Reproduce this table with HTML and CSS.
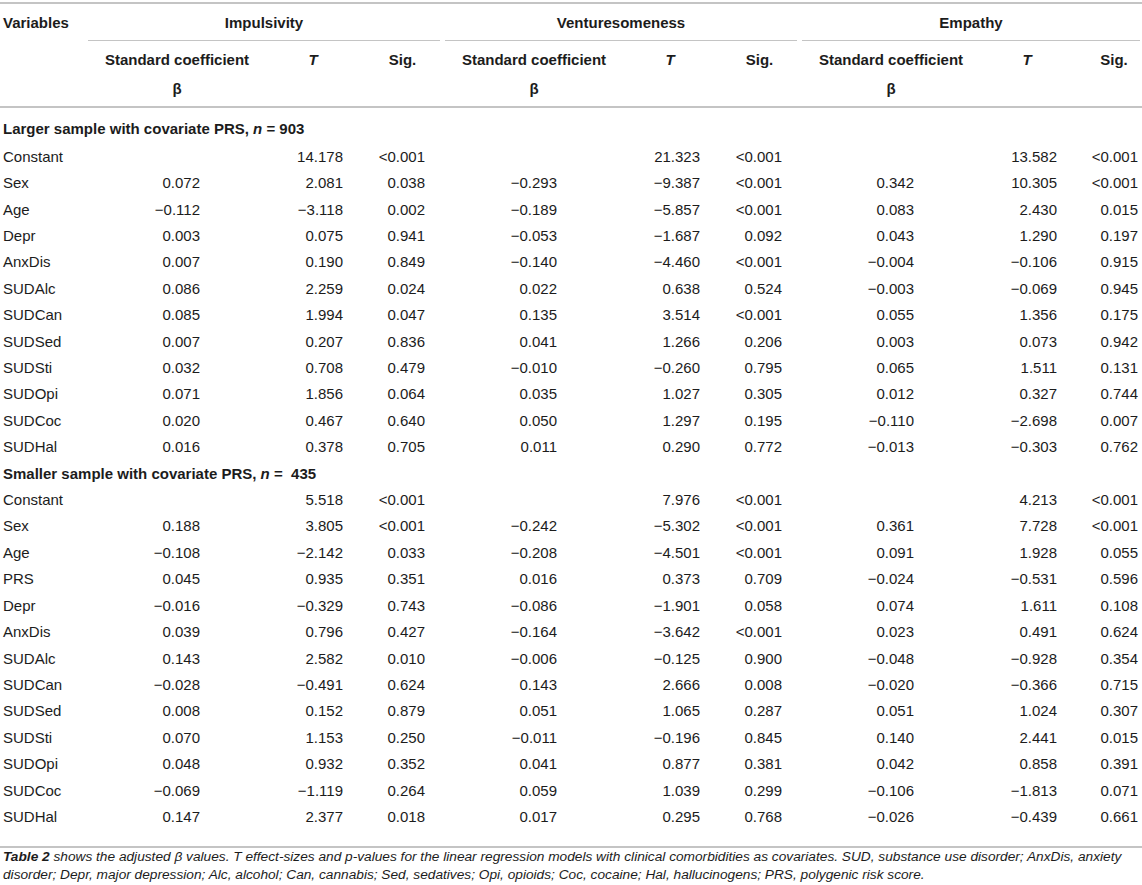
FILE: index.html
```html
<!DOCTYPE html>
<html lang="en">

<head>
  <meta charset="UTF-8">
  <meta name="viewport" content="width=device-width, initial-scale=1.0">
  <title>Table 2</title>
  <link rel="stylesheet" href="styles.css">
</head>

<body>
  <table class="stats">
    <colgroup>
      <col class="c-var">
      <col class="c-b"><col class="c-t"><col class="c-p">
      <col class="c-b"><col class="c-t"><col class="c-p">
      <col class="c-b"><col class="c-t"><col class="c-p-last">
    </colgroup>
    <thead>
      <tr>
        <th class="var" rowspan="2">Variables</th>
        <th class="group" colspan="3"><div class="group-title">Impulsivity</div></th>
        <th class="group" colspan="3"><div class="group-title">Venturesomeness</div></th>
        <th class="group last" colspan="3"><div class="group-title">Empathy</div></th>
      </tr>
      <tr class="sub">
        <th>Standard coefficient<br>β</th>
        <th><i>T</i></th>
        <th>Sig.</th>
        <th>Standard coefficient<br>β</th>
        <th><i>T</i></th>
        <th>Sig.</th>
        <th>Standard coefficient<br>β</th>
        <th><i>T</i></th>
        <th class="sig-last">Sig.</th>
      </tr>
    </thead>
    <tbody>
      <tr class="section first">
        <td colspan="10">Larger sample with covariate PRS, <i>n</i> = 903</td>
      </tr>
      <tr><td>Constant</td><td></td><td>14.178</td><td>&lt;0.001</td><td></td><td>21.323</td><td>&lt;0.001</td><td></td><td>13.582</td><td>&lt;0.001</td></tr>
      <tr><td>Sex</td><td>0.072</td><td>2.081</td><td>0.038</td><td>−0.293</td><td>−9.387</td><td>&lt;0.001</td><td>0.342</td><td>10.305</td><td>&lt;0.001</td></tr>
      <tr><td>Age</td><td>−0.112</td><td>−3.118</td><td>0.002</td><td>−0.189</td><td>−5.857</td><td>&lt;0.001</td><td>0.083</td><td>2.430</td><td>0.015</td></tr>
      <tr><td>Depr</td><td>0.003</td><td>0.075</td><td>0.941</td><td>−0.053</td><td>−1.687</td><td>0.092</td><td>0.043</td><td>1.290</td><td>0.197</td></tr>
      <tr><td>AnxDis</td><td>0.007</td><td>0.190</td><td>0.849</td><td>−0.140</td><td>−4.460</td><td>&lt;0.001</td><td>−0.004</td><td>−0.106</td><td>0.915</td></tr>
      <tr><td>SUDAlc</td><td>0.086</td><td>2.259</td><td>0.024</td><td>0.022</td><td>0.638</td><td>0.524</td><td>−0.003</td><td>−0.069</td><td>0.945</td></tr>
      <tr><td>SUDCan</td><td>0.085</td><td>1.994</td><td>0.047</td><td>0.135</td><td>3.514</td><td>&lt;0.001</td><td>0.055</td><td>1.356</td><td>0.175</td></tr>
      <tr><td>SUDSed</td><td>0.007</td><td>0.207</td><td>0.836</td><td>0.041</td><td>1.266</td><td>0.206</td><td>0.003</td><td>0.073</td><td>0.942</td></tr>
      <tr><td>SUDSti</td><td>0.032</td><td>0.708</td><td>0.479</td><td>−0.010</td><td>−0.260</td><td>0.795</td><td>0.065</td><td>1.511</td><td>0.131</td></tr>
      <tr><td>SUDOpi</td><td>0.071</td><td>1.856</td><td>0.064</td><td>0.035</td><td>1.027</td><td>0.305</td><td>0.012</td><td>0.327</td><td>0.744</td></tr>
      <tr><td>SUDCoc</td><td>0.020</td><td>0.467</td><td>0.640</td><td>0.050</td><td>1.297</td><td>0.195</td><td>−0.110</td><td>−2.698</td><td>0.007</td></tr>
      <tr><td>SUDHal</td><td>0.016</td><td>0.378</td><td>0.705</td><td>0.011</td><td>0.290</td><td>0.772</td><td>−0.013</td><td>−0.303</td><td>0.762</td></tr>
      <tr class="section">
        <td colspan="10">Smaller sample with covariate PRS, <i>n</i> =&nbsp; 435</td>
      </tr>
      <tr><td>Constant</td><td></td><td>5.518</td><td>&lt;0.001</td><td></td><td>7.976</td><td>&lt;0.001</td><td></td><td>4.213</td><td>&lt;0.001</td></tr>
      <tr><td>Sex</td><td>0.188</td><td>3.805</td><td>&lt;0.001</td><td>−0.242</td><td>−5.302</td><td>&lt;0.001</td><td>0.361</td><td>7.728</td><td>&lt;0.001</td></tr>
      <tr><td>Age</td><td>−0.108</td><td>−2.142</td><td>0.033</td><td>−0.208</td><td>−4.501</td><td>&lt;0.001</td><td>0.091</td><td>1.928</td><td>0.055</td></tr>
      <tr><td>PRS</td><td>0.045</td><td>0.935</td><td>0.351</td><td>0.016</td><td>0.373</td><td>0.709</td><td>−0.024</td><td>−0.531</td><td>0.596</td></tr>
      <tr><td>Depr</td><td>−0.016</td><td>−0.329</td><td>0.743</td><td>−0.086</td><td>−1.901</td><td>0.058</td><td>0.074</td><td>1.611</td><td>0.108</td></tr>
      <tr><td>AnxDis</td><td>0.039</td><td>0.796</td><td>0.427</td><td>−0.164</td><td>−3.642</td><td>&lt;0.001</td><td>0.023</td><td>0.491</td><td>0.624</td></tr>
      <tr><td>SUDAlc</td><td>0.143</td><td>2.582</td><td>0.010</td><td>−0.006</td><td>−0.125</td><td>0.900</td><td>−0.048</td><td>−0.928</td><td>0.354</td></tr>
      <tr><td>SUDCan</td><td>−0.028</td><td>−0.491</td><td>0.624</td><td>0.143</td><td>2.666</td><td>0.008</td><td>−0.020</td><td>−0.366</td><td>0.715</td></tr>
      <tr><td>SUDSed</td><td>0.008</td><td>0.152</td><td>0.879</td><td>0.051</td><td>1.065</td><td>0.287</td><td>0.051</td><td>1.024</td><td>0.307</td></tr>
      <tr><td>SUDSti</td><td>0.070</td><td>1.153</td><td>0.250</td><td>−0.011</td><td>−0.196</td><td>0.845</td><td>0.140</td><td>2.441</td><td>0.015</td></tr>
      <tr><td>SUDOpi</td><td>0.048</td><td>0.932</td><td>0.352</td><td>0.041</td><td>0.877</td><td>0.381</td><td>0.042</td><td>0.858</td><td>0.391</td></tr>
      <tr><td>SUDCoc</td><td>−0.069</td><td>−1.119</td><td>0.264</td><td>0.059</td><td>1.039</td><td>0.299</td><td>−0.106</td><td>−1.813</td><td>0.071</td></tr>
      <tr class="last"><td>SUDHal</td><td>0.147</td><td>2.377</td><td>0.018</td><td>0.017</td><td>0.295</td><td>0.768</td><td>−0.026</td><td>−0.439</td><td>0.661</td></tr>
    </tbody>
  </table>
  <p class="note"><b>Table 2</b> shows the adjusted β values. T effect-sizes and p-values for the linear regression models with clinical comorbidities as covariates. SUD, substance use disorder; AnxDis, anxiety disorder; Depr, major depression; Alc, alcohol; Can, cannabis; Sed, sedatives; Opi, opioids; Coc, cocaine; Hal, hallucinogens; PRS, polygenic risk score.</p>
</body>

</html>
```

FILE: styles.css
```css
body {
  margin: 0;
  font-family: "Liberation Sans", Arial, sans-serif;
  color: #1c1c1c;
  background: #fff;
}

/* table */
.stats {
  width: 1142px;
  margin-top: 2px;
  table-layout: fixed;
  border-collapse: separate;
  border-spacing: 0;
  border-top: 2px solid #c4c4c4;
  font-size: 15px;
}

.c-var {
  width: 88px;
}

.c-b {
  width: 178px;
}

.c-t {
  width: 94px;
}

.c-p {
  width: 85px;
}

.c-p-last {
  width: 68px;
}

/* header */
.stats th {
  font-weight: bold;
  vertical-align: top;
}

.stats th.var {
  text-align: left;
  padding: 10px 0 0 3px;
  line-height: 18px;
  border-bottom: 2px solid #c4c4c4;
}

.stats th.group {
  padding: 0;
}

.group-title {
  margin-right: 5px;
  padding: 10px 0 8px;
  line-height: 18px;
  text-align: center;
  border-bottom: 1px solid #c4c4c4;
}

.group.last .group-title {
  margin-right: 2px;
}

.sub th {
  padding: 3.5px 0;
  line-height: 29px;
  text-align: center;
  border-bottom: 2px solid #c4c4c4;
}

.sub th.sig-last {
  padding-left: 12px;
}

/* body */
.stats td {
  padding: 0;
  line-height: 26.4px;
  text-align: right;
  white-space: nowrap;
}

.stats td:nth-child(1) {
  text-align: left;
  padding-left: 3px;
}

.stats td:nth-child(2),
.stats td:nth-child(5),
.stats td:nth-child(8) {
  padding-right: 66px;
}

.stats td:nth-child(3),
.stats td:nth-child(6),
.stats td:nth-child(9) {
  padding-right: 17px;
}

.stats td:nth-child(4),
.stats td:nth-child(7) {
  padding-right: 20px;
}

.stats td:nth-child(10) {
  padding-right: 4px;
}

.section td {
  font-weight: bold;
}

.section.first td {
  padding-top: 7.8px;
  padding-bottom: 1.6px;
}

.last td {
  padding-bottom: 15.8px;
  border-bottom: 2px solid #c4c4c4;
}

/* footnote */
.note {
  margin: 0;
  padding: 0 0 0 3px;
  font-size: 13.7px;
  font-style: italic;
  line-height: 18px;
}
```
